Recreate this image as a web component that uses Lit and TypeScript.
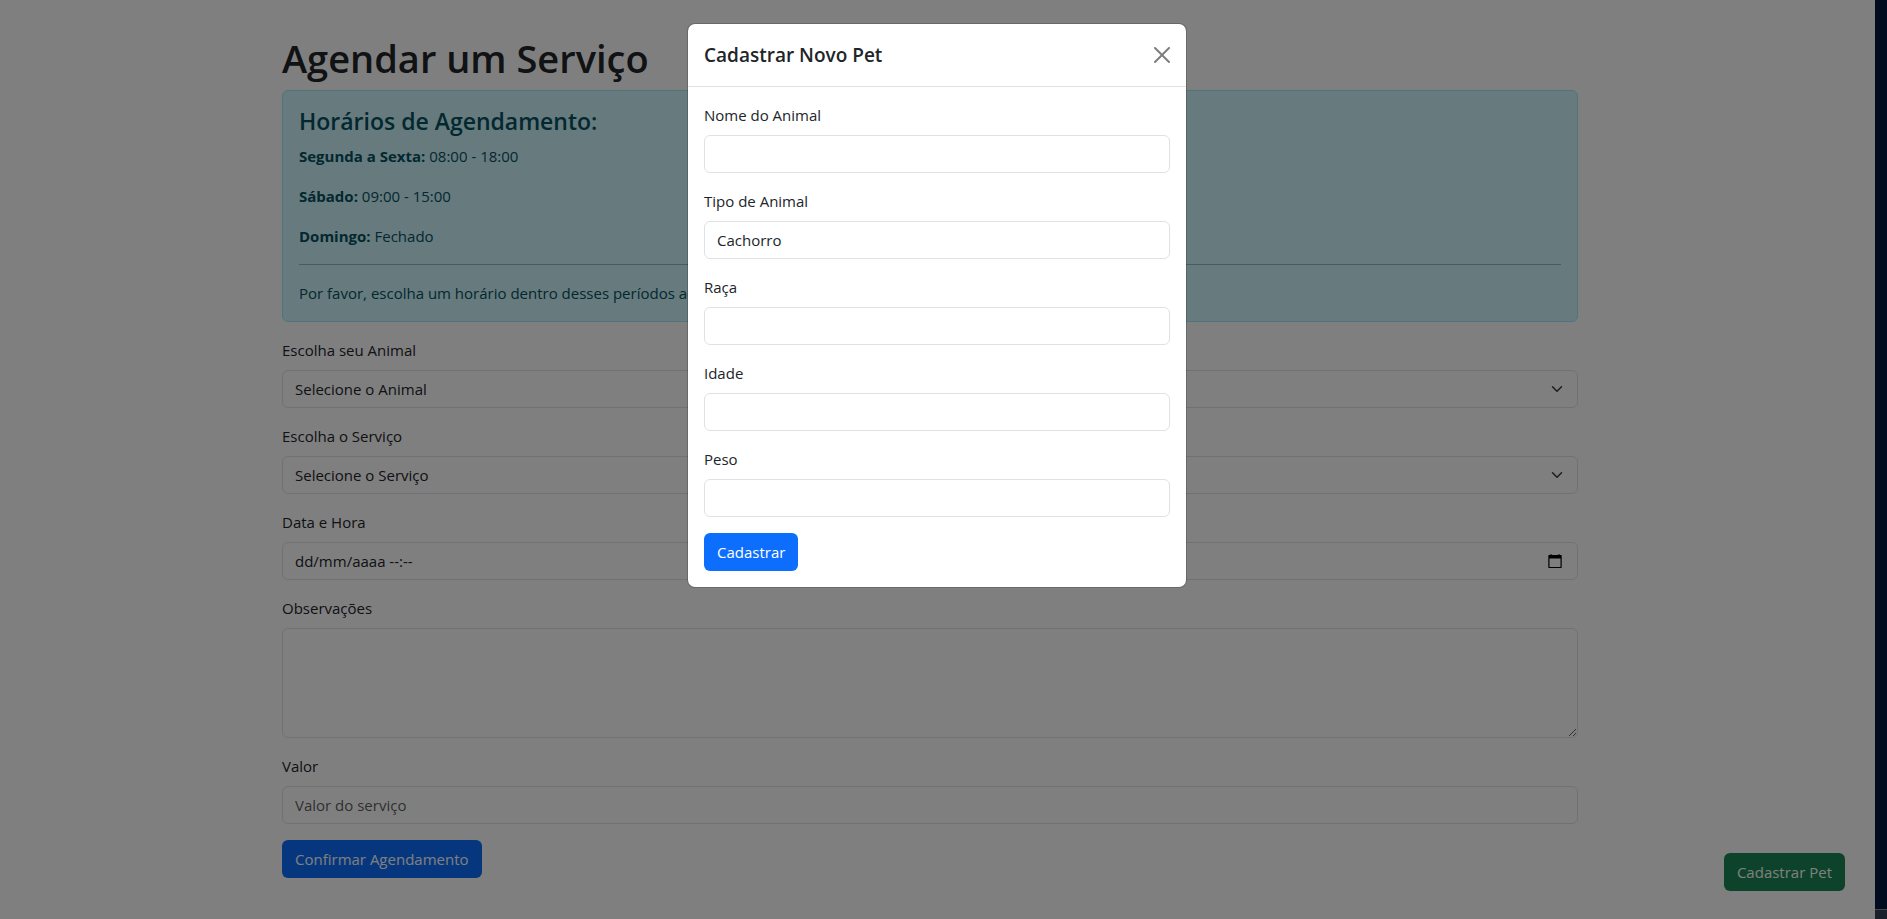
import { LitElement, html, css } from "lit";
import { customElement, state } from "lit/decorators.js";

const chevron = html`<svg class="chevron" viewBox="0 0 16 16" aria-hidden="true">
  <path fill="none" stroke="#343a40" stroke-linecap="round" stroke-linejoin="round" stroke-width="2" d="m2 5 6 6 6-6" />
</svg>`;

const calendar = html`<svg viewBox="0 0 16 16" width="16" height="16" aria-hidden="true">
  <path fill="#000" fill-rule="evenodd" d="M3.500 1h1v1h7V1h1v1h1.500q.7 0 .7.700v11.600q0 .7-.7.700H2q-.7 0-.7-.7V2.700Q1.300 2 2 2h1.500zM2.500 5.500v8.500h11V5.500z" />
</svg>`;

const petFields = [
  { id: "pet-nome", label: "Nome do Animal" },
  { id: "pet-tipo", label: "Tipo de Animal", options: ["Cachorro", "Gato"] },
  { id: "pet-raca", label: "Raça" },
  { id: "pet-idade", label: "Idade" },
  { id: "pet-peso", label: "Peso" },
];

@customElement("app-root")
export class AppRoot extends LitElement {
  @state() private modalOpen = true;

  static styles = css`
    :host {
      display: grid;
      grid-template-columns: minmax(0, 1fr) 12px;
      min-height: 100vh;
      font-family: "Segoe UI", "Open Sans", "Noto Sans", sans-serif;
      font-size: 15px;
      line-height: 24px;
      color: #212529;
    }
    *, *::before, *::after { box-sizing: border-box; }
    h1, h2, h3, p { margin: 0; }
    .page {
      position: relative;
      background: #fff;
      padding: 34px 15px 40px 0;
    }
    .edge {
      display: flex;
      flex-direction: column;
      background: #010c1e;
    }
    .edge-bar {
      margin-top: auto;
      height: 10px;
      background: #1c202b;
      border-top: 1px solid #454950;
    }
    .container {
      max-width: 1320px;
      margin: 0 auto;
      padding: 0 12px;
    }
    h1 {
      font-size: 38px;
      line-height: 48px;
      font-weight: 600;
      margin-bottom: 8px;
    }
    .alert {
      padding: 16px;
      margin-bottom: 16px;
      color: #055160;
      background: #cff4fc;
      border: 1px solid #9eeaf9;
      border-radius: 6px;
    }
    .alert h2 {
      font-size: 23px;
      line-height: 29px;
      font-weight: 600;
      margin-bottom: 8px;
    }
    .alert p + p { margin-top: 16px; }
    hr {
      margin: 16px 0;
      border: 0;
      border-top: 1px solid #9eeaf9;
      border-top-color: #055160;
      opacity: 0.35;
    }
    form {
      display: flex;
      flex-direction: column;
      align-items: flex-start;
      gap: 16px;
    }
    .field {
      display: flex;
      flex-direction: column;
      gap: 8px;
      width: 100%;
    }
    .box { display: grid; align-items: center; }
    .box > * { grid-area: 1 / 1; }
    .control {
      display: block;
      width: 100%;
      height: 38px;
      margin: 0;
      padding: 6px 12px;
      font: inherit;
      color: inherit;
      background: #fff;
      border: 1px solid #dee2e6;
      border-radius: 6px;
      appearance: none;
    }
    .control::placeholder { color: rgba(33, 37, 41, 0.75); opacity: 1; }
    .control.date::placeholder { color: #212529; }
    textarea.control { height: 110px; resize: vertical; }
    .chevron {
      width: 16px;
      height: 12px;
      justify-self: end;
      margin-right: 13px;
      pointer-events: none;
    }
    .picker {
      display: flex;
      justify-self: end;
      margin-right: 15px;
      padding: 0;
      border: 0;
      background: none;
    }
    .btn {
      height: 38px;
      padding: 0 13px;
      font: inherit;
      color: #fff;
      background: #0d6efd;
      border: 0;
      border-radius: 6px;
      cursor: pointer;
    }
    .btn.success { background: #198754; }
    .floating {
      position: absolute;
      right: 30px;
      bottom: 28px;
    }
    .backdrop {
      position: absolute;
      inset: 0;
      padding: 23px 17px 23px 16px;
      background: rgba(0, 0, 0, 0.5);
    }
    .modal {
      max-width: 500px;
      margin: 0 auto;
      background: #fff;
      background-clip: padding-box;
      border: 1px solid rgba(0, 0, 0, 0.175);
      border-radius: 8px;
    }
    .modal-header {
      display: flex;
      align-items: center;
      justify-content: space-between;
      padding: 16px;
      border-bottom: 1px solid #dee2e6;
    }
    .modal-header h3 {
      font-size: 19px;
      line-height: 30px;
      font-weight: 600;
    }
    .close {
      display: flex;
      padding: 0;
      border: 0;
      background: none;
      opacity: 0.5;
      cursor: pointer;
    }
    .modal-body { padding: 16px; }
  `;

  private select(id: string, label: string, first: string) {
    return html`<div class="field">
      <label for=${id}>${label}</label>
      <div class="box">
        <select class="control" id=${id}><option>${first}</option></select>
        ${chevron}
      </div>
    </div>`;
  }

  private petField(f: { id: string; label: string; options?: string[] }) {
    return html`<div class="field">
      <label for=${f.id}>${f.label}</label>
      ${f.options
        ? html`<select class="control" id=${f.id}>${f.options.map((o) => html`<option>${o}</option>`)}</select>`
        : html`<input class="control" id=${f.id} type="text" />`}
    </div>`;
  }

  private modal() {
    return html`<div class="backdrop">
      <div class="modal" role="dialog" aria-modal="true" aria-labelledby="modal-title">
        <div class="modal-header">
          <h3 id="modal-title">Cadastrar Novo Pet</h3>
          <button class="close" type="button" aria-label="Fechar" @click=${() => (this.modalOpen = false)}>
            <svg viewBox="0 0 16 16" width="16" height="16" aria-hidden="true">
              <path d="M.293.293a1 1 0 0 1 1.414 0L8 6.586 14.293.293a1 1 0 1 1 1.414 1.414L9.414 8l6.293 6.293a1 1 0 0 1-1.414 1.414L8 9.414l-6.293 6.293a1 1 0 0 1-1.414-1.414L6.586 8 .293 1.707a1 1 0 0 1 0-1.414z" />
            </svg>
          </button>
        </div>
        <form class="modal-body" @submit=${(e: Event) => e.preventDefault()}>
          ${petFields.map((f) => this.petField(f))}
          <button class="btn" type="submit">Cadastrar</button>
        </form>
      </div>
    </div>`;
  }

  render() {
    return html`
      <div class="page">
        <main class="container">
          <h1>Agendar um Serviço</h1>
          <section class="alert">
            <h2>Horários de Agendamento:</h2>
            <p><strong>Segunda a Sexta:</strong> 08:00 - 18:00</p>
            <p><strong>Sábado:</strong> 09:00 - 15:00</p>
            <p><strong>Domingo:</strong> Fechado</p>
            <hr />
            <p>Por favor, escolha um horário dentro desses períodos ao agendar.</p>
          </section>
          <form @submit=${(e: Event) => e.preventDefault()}>
            ${this.select("animal", "Escolha seu Animal", "Selecione o Animal")}
            ${this.select("servico", "Escolha o Serviço", "Selecione o Serviço")}
            <div class="field">
              <label for="data">Data e Hora</label>
              <div class="box">
                <input class="control date" id="data" type="text" placeholder="dd/mm/aaaa --:--" />
                <button class="picker" type="button" aria-label="Abrir calendário">${calendar}</button>
              </div>
            </div>
            <div class="field">
              <label for="obs">Observações</label>
              <textarea class="control" id="obs"></textarea>
            </div>
            <div class="field">
              <label for="valor">Valor</label>
              <input class="control" id="valor" type="text" placeholder="Valor do serviço" />
            </div>
            <button class="btn" type="submit">Confirmar Agendamento</button>
          </form>
        </main>
        <button class="btn success floating" type="button" @click=${() => (this.modalOpen = true)}>Cadastrar Pet</button>
        ${this.modalOpen ? this.modal() : null}
      </div>
      <div class="edge"><div class="edge-bar"></div></div>
    `;
  }
}
